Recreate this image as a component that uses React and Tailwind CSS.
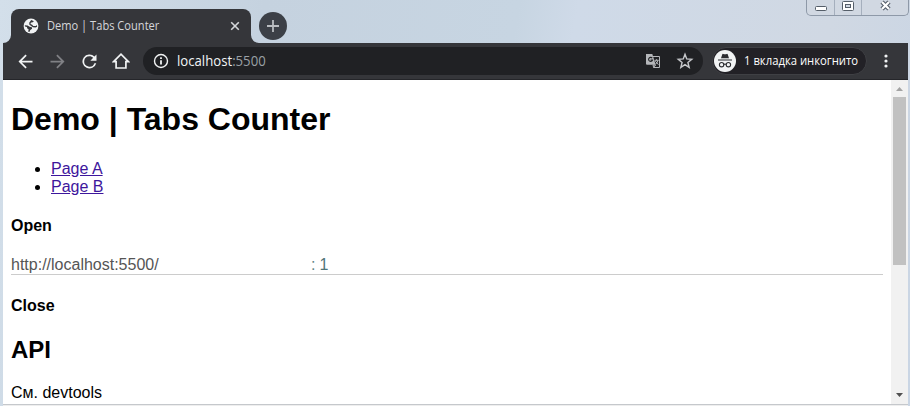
import React from "react";

const ui = "font-['Open_Sans','Noto_Sans',sans-serif]";

function Tick({ d, className }) {
  return (
    <svg viewBox="0 0 24 24" className={`h-[21px] w-[21px] shrink-0 ${className}`} fill="currentColor">
      <path d={d} />
    </svg>
  );
}

function TabStrip() {
  return (
    <div className="flex h-[43px] items-end pl-[3px]">
      <svg viewBox="0 0 8 8" className="h-2 w-2 shrink-0 text-[#35363a]" fill="currentColor">
        <path d="M8 0v8H0a8 8 0 0 0 8-8z" />
      </svg>
      <div className="flex h-[34px] w-[240px] shrink-0 items-center rounded-t-[8px] bg-[#35363a] pl-3 pr-[11px] text-[#d5d7da]">
        <svg viewBox="0 0 16 16" className="h-4 w-4 shrink-0">
          <circle cx="8" cy="8" r="7.4" fill="#f1f3f4" />
          <path d="M8.2 1.9 11 3.2 9.2 4.6 8 4.5l-.6 1.4 1.8.8 1 1.4h2.7l1-1.2.2 1.8-1.6.9-2.6-.3L8.2 8 6.4 6.8l-.2-2zM1.8 7.2l2.8.3 2 1.3 2.3.4.2 1.5-1.8 1.2-.9 2-1.3-.3.6-2.2-1.4-.8-.4-1.7-1.9-.3z" fill="#35363a" />
        </svg>
        <span className={`ml-2 grow whitespace-nowrap text-[12px] leading-4 ${ui}`}>
          <span className="inline-block origin-left scale-x-[0.925]">Demo | Tabs Counter</span>
        </span>
        <svg viewBox="0 0 10 10" className="h-[10px] w-[10px] shrink-0" stroke="currentColor" strokeWidth="1.6">
          <path d="m1.2 1.2 7.6 7.6M8.8 1.2 1.2 8.8" />
        </svg>
      </div>
      <svg viewBox="0 0 8 8" className="h-2 w-2 shrink-0 text-[#35363a]" fill="currentColor">
        <path d="M0 0v8h8a8 8 0 0 1-8-8z" />
      </svg>
      <div className="mb-[3px] flex h-7 w-7 shrink-0 items-center justify-center rounded-full bg-[#3c4047]">
        <svg viewBox="0 0 12 12" className="h-3 w-3" stroke="#b9bcc0" strokeWidth="1.8">
          <path d="M6 0v12M0 6h12" />
        </svg>
      </div>
      <div className="ml-auto mr-px flex h-4 w-[103px] self-start rounded-b-[5px] border border-t-0 border-[#8e99a8] bg-[#d1d8e2]">
        <svg viewBox="0 0 101 15" className="h-[15px] w-[101px]" fill="none">
          <path d="M27.5 0v15M54.5 0v15" stroke="#a5afbd" />
          <rect x="8.5" y="6.5" width="11" height="4" rx="1" fill="#fff" stroke="#555e69" />
          <rect x="35.5" y="1.5" width="11" height="9" rx="1" fill="#fff" stroke="#555e69" />
          <rect x="38.5" y="4.5" width="5" height="3" fill="#d1d8e2" stroke="#555e69" />
          <path d="m75 2 7 7m0-7-7 7" stroke="#555e69" strokeWidth="4.4" />
          <path d="m75 2 7 7m0-7-7 7" stroke="#fff" strokeWidth="2.2" />
        </svg>
      </div>
    </div>
  );
}

function Toolbar() {
  return (
    <div className="flex h-[37px] items-center border-b border-[#25262a] bg-[#35363a] pl-3 text-[#f1f3f4]">
      <Tick d="M20 11H7.8l5.6-5.6L12 4l-8 8 8 8 1.4-1.4L7.8 13H20z" />
      <Tick className="ml-[11px] text-[#808185]" d="m12 4-1.4 1.4 5.6 5.6H4v2h12.2l-5.6 5.6L12 20l8-8z" />
      <Tick className="ml-[11px]" d="M17.65 6.35A8 8 0 1 0 19.7 14h-2.1A6 6 0 1 1 12 6c1.66 0 3.14.69 4.22 1.78L13 11h7V4z" />
      <svg viewBox="0 0 18 18" className="ml-[12px] h-[18px] w-[18px] shrink-0" fill="none" stroke="currentColor" strokeWidth="1.7">
        <path d="M1.6 9.6 9 2.2l7.4 7.4H13.9V16H4.1V9.6z" />
      </svg>
      <div className={`ml-[13px] flex h-7 w-[560px] shrink-0 items-center rounded-full bg-[#202124] pl-[10px] pr-[9px] text-[14px] leading-5 ${ui}`}>
        <svg viewBox="0 0 16 16" className="h-4 w-4 shrink-0">
          <circle cx="8" cy="8" r="6.5" fill="none" stroke="currentColor" strokeWidth="1.4" />
          <path d="M7.1 7.2h1.8v4.3H7.1zM7.1 4.2h1.8v1.7H7.1z" fill="currentColor" />
        </svg>
        <span className="ml-2 grow whitespace-nowrap">
          <span className="inline-block origin-left scale-x-[0.94]">
            localhost<span className="text-[#9aa0a6]">:5500</span>
          </span>
        </span>
        <svg viewBox="0 0 16 16" className="h-4 w-4 shrink-0">
          <path d="M7 3.5h7.5v11H8.4" fill="none" stroke="#b5b7ba" strokeWidth="1" />
          <path d="M1 1h6.3l3.4 10.7H2a1 1 0 0 1-1-1z" fill="#b5b7ba" />
          <path d="M7.2 5.2A2 2 0 1 0 7.5 7H5.6" fill="none" stroke="#202124" strokeWidth="1.1" />
          <path d="M9.6 7.3h4M11.6 6.2v1.1M13 7.4c-.4 1.7-1.3 2.8-2.4 3.7M10.4 8.2l3 3.5M8 12h2.6l-2 2.4z" fill="none" stroke="#b5b7ba" strokeWidth="1" />
        </svg>
        <svg viewBox="0 0 24 24" className="ml-[15px] h-[18px] w-[18px] shrink-0" fill="none" stroke="#c6c8cb" strokeWidth="1.9">
          <path d="m12 3 2.3 6.2 6.7.5-5.1 4.3 1.6 6.4L12 16.8l-5.5 3.6L8.1 14 3 9.7l6.7-.5z" />
        </svg>
      </div>
      <div className={`ml-[9px] flex h-7 w-[155px] shrink-0 items-center rounded-full border border-[#3f4044] bg-[#222126] pl-px text-[12px] font-medium leading-4 text-white ${ui}`}>
        <svg viewBox="0 0 22 22" className="h-[22px] w-[22px] shrink-0">
          <circle cx="11" cy="11" r="11" fill="#f1f3f4" />
          <path d="M7 8.3 8.3 4.3q.3-.7 1-.4 1.7.6 3.4 0 .7-.3 1 .4L15 8.3zM4 9.5h14v1.1H4z" fill="#2b2c30" />
          <g fill="none" stroke="#2b2c30" strokeWidth="1.1">
            <circle cx="7.6" cy="14.7" r="2.2" />
            <circle cx="14.4" cy="14.7" r="2.2" />
            <path d="M9.8 14.4q1.2-.7 2.4 0" />
          </g>
        </svg>
        <span className="ml-2 inline-block origin-left scale-x-[0.94] whitespace-nowrap">1 вкладка инкогнито</span>
      </div>
      <svg viewBox="0 0 4 14" className="ml-[17px] h-[14px] w-1 shrink-0" fill="currentColor">
        <circle cx="2" cy="2" r="1.6" />
        <circle cx="2" cy="7" r="1.6" />
        <circle cx="2" cy="12" r="1.6" />
      </svg>
    </div>
  );
}

function Page() {
  return (
    <main className="h-full grow overflow-hidden bg-white px-2 pt-[21px] font-['Liberation_Sans',Arial,sans-serif] text-[16px] leading-[18px] text-black">
      <h1 className="text-[32px] font-bold leading-[37px]">Demo | Tabs Counter</h1>
      <ul className="mt-[22px] list-disc pl-10">
        <li><a className="text-[#3d169c] underline">Page A</a></li>
        <li><a className="text-[#3d169c] underline">Page B</a></li>
      </ul>
      <h4 className="mt-[21px] font-bold">Open</h4>
      <div className="mt-[21px] flex h-[19px] border-b border-[#cccccc] text-[#555555]">
        <span className="w-[300px]">http://localhost:5500/</span>
        <span className="text-[#5f8588]">:</span>
        <span className="ml-1 text-[#517478]">1</span>
      </div>
      <h4 className="mt-[22px] font-bold">Close</h4>
      <h2 className="mt-[21px] text-[24px] font-bold leading-[27px]">API</h2>
      <p className="mt-[21px]">См. devtools</p>
    </main>
  );
}

function Scrollbar() {
  return (
    <div className="flex h-full w-[17px] shrink-0 flex-col items-center bg-[#f1f1f1]">
      <svg viewBox="0 0 17 17" className="h-[17px] w-[17px] shrink-0"><path d="m5 11 3.5-4 3.5 4z" fill="#a3a3a3" /></svg>
      <div className="h-[168px] w-[13px] bg-[#c1c1c1]" />
      <svg viewBox="0 0 17 17" className="mt-auto h-[17px] w-[17px] shrink-0"><path d="m5 6 3.5 4L12 6z" fill="#505050" /></svg>
    </div>
  );
}

export default function App() {
  return (
    <div className="flex h-[406px] w-[910px] flex-col overflow-hidden bg-[linear-gradient(100deg,#d3dfea_0%,#c5d2df_27%,#c7d5e2_53%,#cfdae8_59%,#d0d8e3_85%,#c9d5e4_100%)]">
      <TabStrip />
      <div className="ml-[3px] mr-[2px] flex h-[361px] flex-col">
        <Toolbar />
        <div className="flex h-[324px]">
          <Page />
          <Scrollbar />
        </div>
      </div>
      <div className="ml-[3px] mr-[2px] h-[2px] border-t border-[#c5c8cc] bg-[#eeeeee]" />
    </div>
  );
}
